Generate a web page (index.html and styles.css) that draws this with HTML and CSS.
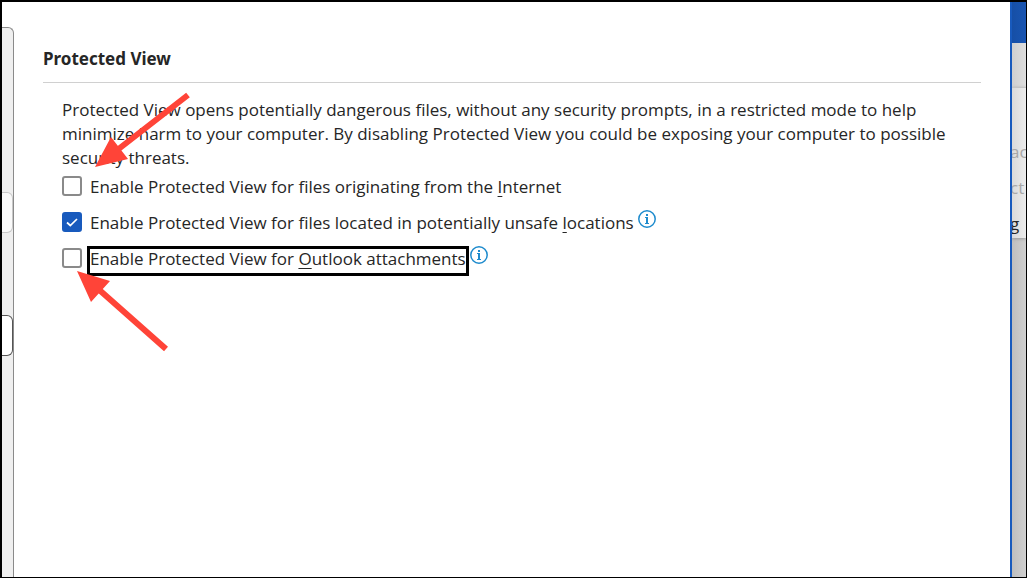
FILE: index.html
```html
<!DOCTYPE html>
<html lang="en">
<head>
    <meta charset="UTF-8">
    <meta name="viewport" content="width=device-width, initial-scale=1.0">
    <title>Protected View</title>
    <link rel="stylesheet" href="styles.css">
</head>
<body>
    <div class="window">
        <aside class="category-list">
            <div class="category hovered"></div>
            <div class="category selected"></div>
        </aside>
        <main class="settings">
            <h1>Protected View</h1>
            <div class="settings-body">
                <p>Protected View opens potentially dangerous files, without any security prompts, in a restricted mode to help minimize harm to your computer. By disabling Protected View you could be exposing your computer to possible security threats.</p>
                <div class="option">
                    <input type="checkbox" id="pv-internet">
                    <label for="pv-internet">Enable Protected View for files originating from the <u>I</u>nternet</label>
                </div>
                <div class="option">
                    <input type="checkbox" id="pv-unsafe" checked>
                    <label for="pv-unsafe">Enable Protected View for files located in potentially unsafe <u>l</u>ocations</label>
                    <svg class="info" viewBox="0 0 18 18">
                        <circle cx="9" cy="9" r="8.2"/>
                        <path d="M8 4h2v2H8zM7 7h3v6h1v1H7v-1h1V8H7z"/>
                    </svg>
                </div>
                <div class="option">
                    <input type="checkbox" id="pv-outlook">
                    <label for="pv-outlook" class="focused">Enable Protected View for <u>O</u>utlook attachments</label>
                    <svg class="info" viewBox="0 0 18 18">
                        <circle cx="9" cy="9" r="8.2"/>
                        <path d="M8 4h2v2H8zM7 7h3v6h1v1H7v-1h1V8H7z"/>
                    </svg>
                </div>
            </div>
            <svg class="arrows" viewBox="0 0 200 360">
                <path class="shaft" d="M188 95L116 151M166 349L96 287"/>
                <path class="head" d="M95 167L111 137L128 159zM77 271L110 281L91 302z"/>
            </svg>
        </main>
        <aside class="document">
            <div class="title-bar"></div>
            <div class="tabs"></div>
            <div class="ribbon">
                <span>ac</span>
                <span>ct</span>
                <span class="dark">g</span>
            </div>
        </aside>
    </div>
</body>
</html>
```

FILE: styles.css
```css
:root {
    --accent: #185abd;
    --info: #1e8bcd;
    --text: #262626;
    --arrow: #ff4438;
}

* {
    margin: 0;
    padding: 0;
    box-sizing: border-box;
}

body {
    font-family: 'Open Sans', 'Noto Sans', sans-serif;
    font-size: 17px;
    line-height: 24px;
    color: var(--text);
    background-color: #fff;
}

.window {
    display: flex;
    min-height: 100vh;
    border: 1px solid #000;
    border-top-width: 2px;
    border-left-width: 2px;
    overflow: hidden;
}

.category-list {
    flex: none;
    width: 12px;
    margin-top: 25px;
    padding-top: 164px;
    background-color: #efefef;
    border: 1px solid #8a8a8a;
    border-width: 1px 1px 0 0;
    border-radius: 0 6px 0 0;
}

.category {
    height: 41px;
    margin-bottom: 82px;
    border: 1px solid #c8c8c8;
    border-left: none;
    border-radius: 0 6px 6px 0;
    background-color: #fafafa;
}

.category.selected {
    border-color: #555;
    background-color: #fff;
}

.settings {
    position: relative;
    flex: 1;
    padding: 45px 29px 0;
    border-right: 2px solid var(--accent);
}

h1 {
    padding-bottom: 11px;
    font-family: 'Noto Sans', 'Open Sans', sans-serif;
    font-size: 17px;
    line-height: 24px;
    border-bottom: 1px solid #d0d0d0;
}

.settings-body {
    padding: 15px 0 0 19px;
}

.option {
    display: flex;
    align-items: center;
    height: 36px;
}

.option:first-of-type {
    margin-top: -2px;
}

.option input {
    appearance: none;
    flex: none;
    width: 20px;
    height: 20px;
    margin-right: 8px;
    border: 2px solid #8a8a8a;
    border-radius: 3px;
    background-color: #fff;
}

.option input:checked {
    border-color: var(--accent);
    background: var(--accent) url("data:image/svg+xml,%3Csvg xmlns='http://www.w3.org/2000/svg' viewBox='0 0 16 16'%3E%3Cpath d='M3 8.5L6.3 11.5L13 5' fill='none' stroke='white' stroke-width='1.7'/%3E%3C/svg%3E") center / 16px no-repeat;
}

.option label {
    margin-top: 6px;
    padding-bottom: 4px;
    line-height: 20px;
}

.option u {
    text-underline-offset: 3px;
    text-decoration-thickness: 1px;
}

.focused {
    outline: 3px solid #000;
}

.info {
    flex: none;
    width: 18px;
    height: 18px;
    margin: 0 0 6px 4px;
}

.info circle {
    fill: none;
    stroke: var(--info);
    stroke-width: 1.5;
}

.info path {
    fill: var(--info);
}

.arrows {
    position: absolute;
    top: -2px;
    left: -14px;
    width: 200px;
    height: 360px;
    pointer-events: none;
}

.shaft {
    fill: none;
    stroke: var(--arrow);
    stroke-width: 6;
}

.head {
    fill: var(--arrow);
}

.document {
    flex: none;
    width: 14px;
    overflow: hidden;
    background: linear-gradient(to right, #bebebe, #d0d0d0);
}

.title-bar {
    height: 41px;
    background: linear-gradient(to right, #164fa6, #1955b2);
}

.tabs {
    height: 44px;
    background: linear-gradient(to right, #cfcfcf, #dedede);
}

.ribbon {
    display: flex;
    flex-direction: column;
    gap: 12px;
    height: 151px;
    padding-top: 52px;
    color: #a8a8a8;
    border-top: 1px solid #c4c4c4;
    background: linear-gradient(to right, #dadada, #ececec);
    box-shadow: 0 1px 3px #999;
}

.ribbon span {
    margin-left: -2px;
}

.ribbon .dark {
    color: var(--text);
}
```
